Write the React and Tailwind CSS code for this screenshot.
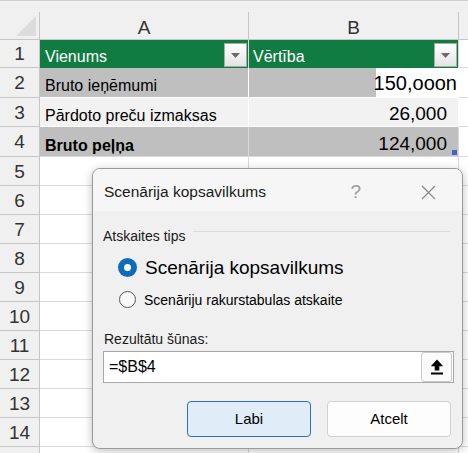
import React from 'react';

const rowH = [28, 30, 29, 30, 29, 29, 29, 29, 29, 29, 29, 29, 29, 29, 12];

function DropBtn() {
  return (
    <div className="w-[23px] h-[24px] mb-[1px] mr-[1px] border border-[#a9a9a9] bg-gradient-to-b from-white to-[#e4e4e4] flex items-center justify-center">
      <svg width="9" height="5" viewBox="0 0 9 5"><path d="M0 0h9L4.5 5z" fill="#6b6b6b" /></svg>
    </div>
  );
}

function Cells({ i }) {
  const n = i + 1;
  if (n === 1)
    return (
      <>
        <div className="w-[209px] bg-[#107c41] border-r border-[#d9d9d9] flex items-end justify-between pl-[5px]">
          <span className="text-white text-[16px] leading-none pb-[3px]">Vienums</span>
          <DropBtn />
        </div>
        <div className="w-[210px] bg-[#107c41] border-r border-[#d9d9d9] flex items-end justify-between pl-[4px]">
          <span className="text-white text-[16px] leading-none pb-[3px]">Vērtība</span>
          <DropBtn />
        </div>
      </>
    );
  if (n === 2)
    return (
      <>
        <div className="w-[209px] bg-[#bfbfbf] border-r border-b border-white flex items-end pl-[5px]">
          <span className="text-[16px] leading-none text-black pb-[3px]">Bruto ieņēmumi</span>
        </div>
        <div className="w-[210px] bg-[#bfbfbf] border-r border-b border-white flex justify-end">
          <div className="w-[82px] bg-white flex items-end justify-end">
            <span className="text-[20px] leading-none text-black pb-[4px] pr-[1px]">150,ooon</span>
          </div>
        </div>
      </>
    );
  if (n === 3)
    return (
      <>
        <div className="w-[209px] bg-[#f2f2f2] border-r border-b border-white flex items-end pl-[5px]">
          <span className="text-[16px] leading-none text-black pb-[2px]">Pārdoto preču izmaksas</span>
        </div>
        <div className="w-[210px] bg-[#f2f2f2] border-r border-b border-white flex items-end justify-end pr-[11px]">
          <span className="text-[19px] leading-none text-black pb-[3px]">26,000</span>
        </div>
      </>
    );
  if (n === 4)
    return (
      <>
        <div className="w-[209px] bg-[#bfbfbf] border-r border-b border-[#d9d9d9] flex items-end pl-[5px]">
          <span className="text-[16px] leading-none font-bold text-black pb-[2px]">Bruto peļņa</span>
        </div>
        <div className="relative w-[210px] bg-[#bfbfbf] border-r border-b border-[#d9d9d9] flex items-end justify-end pr-[11px]">
          <span className="text-[19px] leading-none text-black pb-[3px]">124,000</span>
          <div className="absolute right-[1px] bottom-[1px] w-[5px] h-[5px] bg-[#4a62c2]" />
        </div>
      </>
    );
  return (
    <>
      <div className="w-[209px] bg-white border-r border-b border-[#dadada]" />
      <div className="w-[210px] bg-white border-r border-b border-[#dadada]" />
    </>
  );
}

function Dialog() {
  return (
    <div className="absolute left-[92px] top-[168px] w-[371px] h-[281px] rounded-[8px] border border-[#9a9a9a] bg-[#f0f0f0] shadow-[0_2px_10px_rgba(0,0,0,0.25)] overflow-hidden flex flex-col">
      <div className="h-[42px] bg-[#f6f6f6] flex items-center pl-[11px] pr-[26px] pt-[4px]">
        <span className="text-[15.5px] text-[#1a1a1a] flex-1">Scenārija kopsavilkums</span>
        <span className="text-[19px] text-[#9a9a9a] font-light mr-[60px]">?</span>
        <svg width="15" height="15" viewBox="0 0 15 15"><path d="M1 1l13 13M14 1L1 14" stroke="#8a8a8a" strokeWidth="1.2" /></svg>
      </div>
      <div className="flex flex-col px-[10px] pt-[18px]">
        <div className="flex items-center">
          <span className="text-[14px] text-[#1a1a1a] leading-none">Atskaites tips</span>
          <div className="flex-1 h-px bg-[#dcdcdc] ml-[8px] -mt-[10px] mr-[2px]" />
        </div>
        <div className="flex items-center mt-[15px] ml-[15px]">
          <div className="w-[19px] h-[19px] rounded-full bg-[#0f6cbd] flex items-center justify-center">
            <div className="w-[7px] h-[7px] rounded-full bg-white" />
          </div>
          <span className="ml-[8px] text-[19px] leading-none text-black">Scenārija kopsavilkums</span>
        </div>
        <div className="flex items-center mt-[14px] ml-[16px]">
          <div className="w-[17px] h-[17px] rounded-full border border-[#555] bg-[#f8f8f8]" />
          <span className="ml-[8px] text-[14px] leading-none text-black">Scenāriju rakurstabulas atskaite</span>
        </div>
        <span className="mt-[24px] text-[14px] leading-none text-[#1a1a1a] pl-[1px]">Rezultātu šūnas:</span>
        <div className="mt-[5px] h-[32px] w-[351px] bg-white border border-[#a8a8a8] flex items-center justify-between pl-[5px] pr-[1px]">
          <span className="text-[16px] text-black">=$B$4</span>
          <div className="w-[31px] h-[30px] rounded-[3px] border border-[#c9c9c9] bg-[#fbfbfb] flex items-center justify-center">
            <svg width="14" height="16" viewBox="0 0 14 16">
              <path d="M7 0.5L0.8 7.2h3.9V11.5h4.6V7.2h3.9z" fill="#000" />
              <rect x="1" y="13.5" width="12" height="2" fill="#000" />
            </svg>
          </div>
        </div>
        <div className="flex justify-end gap-[16px] mt-[18px] mr-[1px]">
          <button className="w-[124px] h-[36px] rounded-[4px] border border-[#2a6fc0] bg-[#e0ecf8] text-[15px] text-black">Labi</button>
          <button className="w-[124px] h-[36px] rounded-[4px] border border-[#d0d0d0] bg-[#fdfdfd] text-[15px] text-black">Atcelt</button>
        </div>
      </div>
    </div>
  );
}

export default function App() {
  return (
    <div className="relative w-[468px] h-[453px] overflow-hidden bg-white font-['Liberation_Sans',Arial,sans-serif]">
      <div className="flex h-[40px] bg-[#f0f0f0] border-t border-[#cfcfcf]">
        <div className="relative w-[40px] border-r border-b border-[#c6c6c6] mt-[11px]">
          <svg className="absolute right-[3px] bottom-[3px]" width="20" height="20" viewBox="0 0 20 20"><path d="M20 0V20H0z" fill="#dcdcdc" /></svg>
        </div>
        <div className="w-[209px] mt-[11px] border-r border-b border-[#c6c6c6] flex items-end justify-center">
          <span className="text-[19px] text-[#333] pb-[2px] leading-none">A</span>
        </div>
        <div className="w-[210px] mt-[11px] border-r border-b border-[#c6c6c6] flex items-end justify-center">
          <span className="text-[19px] text-[#333] pb-[2px] leading-none">B</span>
        </div>
        <div className="flex-1 mt-[11px] border-b border-[#c6c6c6]" />
      </div>
      {rowH.map((h, i) => (
        <div key={i} className="flex" style={{ height: h }}>
          <div className="w-[40px] bg-[#f0f0f0] border-r border-b border-[#c6c6c6] flex items-center justify-center">
            <span className="text-[19px] text-[#333] leading-none">{i < 14 ? i + 1 : ''}</span>
          </div>
          <Cells i={i} />
          <div className="flex-1 border-b border-[#dadada]" />
        </div>
      ))}
      <Dialog />
    </div>
  );
}
